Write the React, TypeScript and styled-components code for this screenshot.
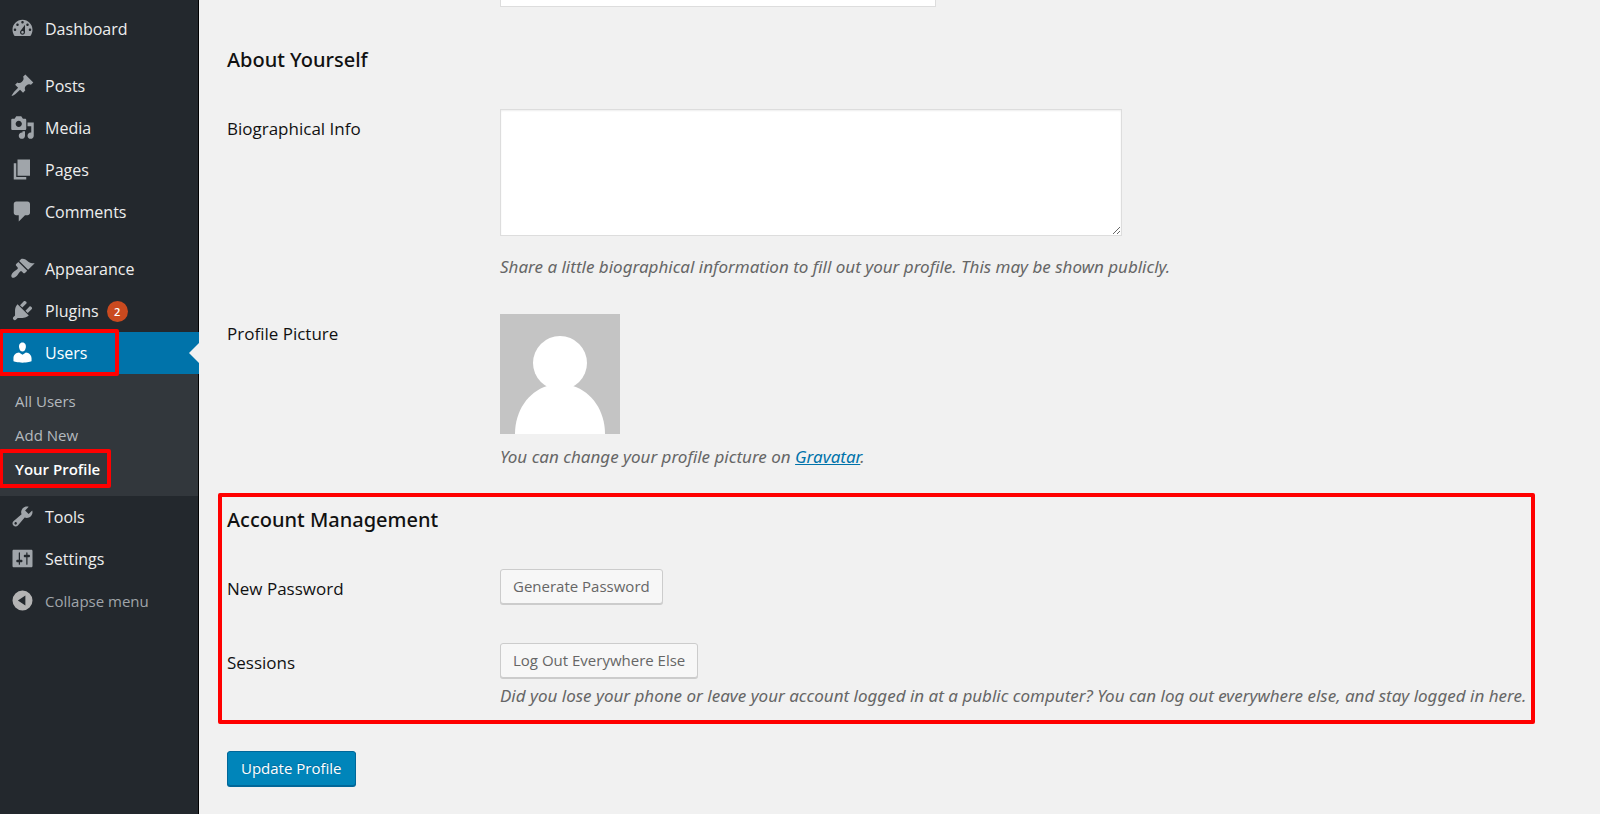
import React from 'react';
import styled, { createGlobalStyle, css } from 'styled-components';

const GlobalStyle = createGlobalStyle`
  *, *::before, *::after { box-sizing: border-box; }
  body {
    margin: 0;
    background: #f1f1f1;
    color: #444;
    font-family: "Open Sans", "Noto Sans", sans-serif;
    font-size: 16px;
  }
`;

const Layout = styled.div`
  display: flex;
  min-height: 100vh;
`;

/* ---------- sidebar ---------- */

const Sidebar = styled.nav`
  flex: 0 0 199px;
  padding-top: 8px;
  background: #23282d;
  border-right: 1px solid #000;
`;

const MenuList = styled.ul`
  list-style: none;
  margin: 0;
  padding: 0;
`;

const MenuItem = styled.li<{ $gapBefore?: boolean }>`
  position: relative;
  margin-top: ${(p) => (p.$gapBefore ? '15px' : '0')};
`;

const menuRow = css`
  display: flex;
  align-items: flex-start;
  gap: 10px;
  height: 42px;
  padding: 0 0 0 10px;
  line-height: 42px;
`;

const MenuLink = styled.a<{ $current?: boolean }>`
  ${menuRow}
  margin-right: ${(p) => (p.$current ? '-1px' : '0')};
  color: ${(p) => (p.$current ? '#fff' : '#eee')};
  background: ${(p) => (p.$current ? '#0073aa' : 'transparent')};
  text-decoration: none;
  svg { fill: ${(p) => (p.$current ? '#fff' : '#a0a5aa')}; }
`;

const CollapseButton = styled.button`
  ${menuRow}
  width: 100%;
  border: 0;
  background: none;
  color: #a0a5aa;
  font-family: inherit;
  font-size: 15px;
  text-align: left;
  cursor: pointer;
  svg { fill: #b4b4b4; }
`;

const IconSvg = styled.svg`
  flex: none;
  width: 25px;
  height: 25px;
  margin-top: 8px;
`;

const CountBadge = styled.span`
  align-self: center;
  width: 21px;
  height: 21px;
  margin-left: -2px;
  border-radius: 50%;
  background: #ca4a1f;
  color: #fff;
  font-size: 11px;
  font-weight: 600;
  line-height: 21px;
  text-align: center;
`;

const CurrentArrow = styled.span`
  position: absolute;
  top: 11px;
  right: -1px;
  border: 10px solid transparent;
  border-left-width: 0;
  border-right-color: #f1f1f1;
`;

const Submenu = styled.ul`
  list-style: none;
  margin: 0;
  padding: 10px 0;
  background: #32373c;
`;

const SubmenuItem = styled.li`
  position: relative;
`;

const SubmenuLink = styled.a<{ $current?: boolean }>`
  display: block;
  padding-left: 15px;
  color: ${(p) => (p.$current ? '#fff' : '#b4b9be')};
  font-size: 15px;
  font-weight: ${(p) => (p.$current ? 600 : 400)};
  line-height: 34px;
  text-decoration: none;
`;

const Highlight = styled.span<{ $width: number }>`
  position: absolute;
  top: -3px;
  bottom: -2px;
  left: -1px;
  width: ${(p) => p.$width}px;
  border: 4px solid #f00;
  border-radius: 2px;
  pointer-events: none;
  z-index: 1;
`;

/* ---------- profile form ---------- */

const Main = styled.main`
  flex: 1;
  min-width: 0;
  padding: 0 65px 27px 28px;
  overflow: hidden;
`;

const Form = styled.form`
  display: flex;
  flex-direction: column;
  align-items: stretch;
`;

const Heading = styled.h2`
  margin: 0 0 36px;
  color: #111;
  font-family: "Noto Sans", sans-serif;
  font-size: 20px;
  font-weight: 500;
  line-height: 26px;
`;

const Rows = styled.div<{ $gap: number }>`
  display: flex;
  flex-direction: column;
  gap: ${(p) => p.$gap}px;
`;

const Row = styled.div`
  display: grid;
  grid-template-columns: 273px minmax(0, 1fr);
  align-items: start;
`;

const RowLabel = styled.label`
  padding-top: 8px;
  color: #111;
  font-size: 17px;
  line-height: 24px;
`;

const Field = styled.div<{ $gap: number }>`
  display: flex;
  flex-direction: column;
  align-items: flex-start;
  gap: ${(p) => p.$gap}px;
`;

/* The page is scrolled, so only the foot of this row is in view. */
const ScrolledRow = styled(Row)`
  margin: -29px 0 40px;
`;

const TextInput = styled.input`
  width: 436px;
  max-width: 100%;
  height: 36px;
  border: 1px solid #ddd;
  background: #fff;
  font: inherit;
`;

const TextArea = styled.textarea`
  display: block;
  width: 622px;
  max-width: 100%;
  height: 127px;
  padding: 4px 8px;
  border: 1px solid #ddd;
  background: #fff;
  box-shadow: inset 0 1px 2px rgba(0, 0, 0, 0.07);
  font: inherit;
  resize: both;
`;

const Description = styled.p`
  margin: 0;
  color: #666;
  font-family: "Noto Sans", sans-serif;
  font-size: 17px;
  font-style: italic;
  line-height: 24px;
  a { color: #0073aa; }
`;

const Avatar = styled.svg`
  display: block;
  width: 120px;
  height: 120px;
`;

const AccountPanel = styled.section`
  margin: 24px 0 27px -9px;
  padding: 10px 4px 12px 5px;
  border: 4px solid #f00;
  border-radius: 2px;
`;

const Button = styled.button<{ $primary?: boolean }>`
  height: 35px;
  padding: 0 12px;
  border: 1px solid ${(p) => (p.$primary ? '#006799' : '#ccc')};
  border-radius: 3px;
  background: ${(p) => (p.$primary ? '#0085ba' : '#f7f7f7')};
  box-shadow: 0 1px 0 ${(p) => (p.$primary ? '#006799' : '#ccc')};
  color: ${(p) => (p.$primary ? '#fff' : '#666')};
  text-shadow: ${(p) => (p.$primary ? '0 -1px 1px #006799' : 'none')};
  font-family: inherit;
  font-size: 15px;
  line-height: 33px;
  cursor: pointer;
`;

const SubmitButton = styled(Button)`
  align-self: flex-start;
  padding: 0 13px;
`;

const paths = {
  dashboard:
    'M3.76 16h12.48c1.1-1.37 1.76-3.11 1.76-5 0-4.42-3.58-8-8-8s-8 3.58-8 8c0 1.89.66 3.63 1.76 5zM10 4c.55 0 1 .45 1 1s-.45 1-1 1-1-.45-1-1 .45-1 1-1zM6 6c.55 0 1 .45 1 1s-.45 1-1 1-1-.45-1-1 .45-1 1-1zm8 0c.55 0 1 .45 1 1s-.45 1-1 1-1-.45-1-1 .45-1 1-1zm-5.37 5.55L12 7v6c0 1.1-.9 2-2 2s-2-.9-2-2c0-.57.24-1.08.63-1.45zM4 10c.55 0 1 .45 1 1s-.45 1-1 1-1-.45-1-1 .45-1 1-1zm12 0c.55 0 1 .45 1 1s-.45 1-1 1-1-.45-1-1 .45-1 1-1zm-5 3c0-.55-.45-1-1-1s-1 .45-1 1 .45 1 1 1 1-.45 1-1z',
  post: 'M10.44 3.02l1.82-1.82 6.36 6.35-1.83 1.82c-1.05-.68-2.48-.57-3.41.36l-.75.75c-.92.93-1.04 2.35-.35 3.41l-1.83 1.82-2.41-2.41-2.8 2.79c-.42.42-3.38 2.71-3.8 2.29s1.86-3.39 2.28-3.81l2.79-2.79L4.1 9.36l1.83-1.82c1.05.69 2.48.57 3.4-.36l.75-.75c.93-.92 1.05-2.35.36-3.41z',
  media:
    'M13 11V4c0-.55-.45-1-1-1h-1.67L9 1H5L3.67 3H2c-.55 0-1 .45-1 1v7c0 .55.45 1 1 1h10c.55 0 1-.45 1-1zM7 4.5c1.38 0 2.5 1.12 2.5 2.5S8.38 9.5 7 9.5 4.5 8.38 4.5 7 5.62 4.5 7 4.5zM14 6h5v10.5c0 1.38-1.12 2.5-2.5 2.5S14 17.88 14 16.5s1.12-2.5 2.5-2.5c.17 0 .34.02.5.05V9h-3V6zm-4 8.05V13h2v3.5c0 1.38-1.12 2.5-2.5 2.5S7 17.88 7 16.5 8.12 14 9.5 14c.17 0 .34.02.5.05z',
  page: 'M6 15V2h10v13H6zm-1 1h8v2H3V5h2v11z',
  comments:
    'M5 2h9c1.1 0 2 .9 2 2v7c0 1.1-.9 2-2 2h-2l-5 5v-5H5c-1.1 0-2-.9-2-2V4c0-1.1.9-2 2-2z',
  appearance:
    'M14.48 11.06L7.41 3.99l1.5-1.5c.5-.56 2.3-.47 3.51.32 1.21.8 1.43 1.28 2.91 2.1 1.18.64 2.45 1.26 4.45.85zm-.71.71L6.7 4.7 4.93 6.47c-.39.39-.39 1.02 0 1.41l1.06 1.06c.39.39.39 1.03 0 1.42-.6.6-1.43 1.11-2.21 1.69-.35.26-.7.53-1.01.84C1.43 14.23.4 16.08 1.4 17.07c.99 1 2.84-.03 4.18-1.36.31-.31.58-.66.85-1.02.57-.78 1.08-1.61 1.69-2.21.39-.39 1.02-.39 1.41 0l1.06 1.06c.39.39 1.02.39 1.41 0z',
  plugins:
    'M13.11 4.36L9.87 7.6 8 5.73l3.24-3.24c.35-.34 1.05-.2 1.56.32.52.51.66 1.21.31 1.55zm-8 1.77l.91-1.12 9.01 9.01-1.19.84c-.71.71-2.63 1.16-3.82 1.16H6.14L4.9 17.26c-.59.59-1.54.59-2.12 0-.59-.58-.59-1.53 0-2.12l1.24-1.24v-3.88c0-1.13.4-3.19 1.09-3.89zm7.26 3.97l3.24-3.24c.34-.35 1.04-.21 1.55.31.52.51.66 1.21.31 1.55l-3.24 3.25z',
  users:
    'M10 9.25c-2.27 0-2.73-3.44-2.73-3.44C7 4.02 7.82 2 9.97 2c2.16 0 2.98 2.02 2.71 3.81 0 0-.41 3.44-2.68 3.44zm0 2.57L12.72 10c2.39 0 4.52 2.33 4.52 4.53v2.49s-3.65 1.13-7.24 1.13c-3.65 0-7.24-1.13-7.24-1.13v-2.49c0-2.25 1.94-4.48 4.47-4.48z',
  tools:
    'M16.68 9.77c-1.34 1.34-3.3 1.67-4.95.99l-5.41 6.52c-.99.99-2.59.99-3.58 0s-.99-2.59 0-3.57l6.52-5.42c-.68-1.65-.35-3.61.99-4.95 1.28-1.28 3.12-1.62 4.72-1.06l-2.89 2.89 2.82 2.82 2.86-2.87c.53 1.58.18 3.39-1.08 4.65zM3.81 16.21c.4.39 1.04.39 1.43 0 .4-.4.4-1.04 0-1.43-.39-.4-1.03-.4-1.43 0-.39.39-.39 1.03 0 1.43z',
  settings:
    'M18 16V4c0-.55-.45-1-1-1H3c-.55 0-1 .45-1 1v12c0 .55.45 1 1 1h14c.55 0 1-.45 1-1zM8 11h1c.55 0 1 .45 1 1s-.45 1-1 1H8v1.5c0 .28-.22.5-.5.5s-.5-.22-.5-.5V13H6c-.55 0-1-.45-1-1s.45-1 1-1h1V5.5c0-.28.22-.5.5-.5s.5.22.5.5V11zm5-2h-1c-.55 0-1-.45-1-1s.45-1 1-1h1V5.5c0-.28.22-.5.5-.5s.5.22.5.5V7h1c.55 0 1 .45 1 1s-.45 1-1 1h-1v5.5c0 .28-.22.5-.5.5s-.5-.22-.5-.5V9z',
  collapse: 'M10 2a8 8 0 1 0 0 16 8 8 0 0 0 0-16zM12.3 6v8L6.3 10z',
};

type IconName = keyof typeof paths;

const Icon = ({ name }: { name: IconName }) => (
  <IconSvg viewBox="0 0 20 20" aria-hidden="true">
    <path d={paths[name]} fillRule="evenodd" />
  </IconSvg>
);

interface Entry {
  name: IconName;
  label: string;
  gapBefore?: boolean;
  count?: number;
  current?: boolean;
}

const entries: Entry[] = [
  { name: 'dashboard', label: 'Dashboard' },
  { name: 'post', label: 'Posts', gapBefore: true },
  { name: 'media', label: 'Media' },
  { name: 'page', label: 'Pages' },
  { name: 'comments', label: 'Comments' },
  { name: 'appearance', label: 'Appearance', gapBefore: true },
  { name: 'plugins', label: 'Plugins', count: 2 },
  { name: 'users', label: 'Users', current: true },
  { name: 'tools', label: 'Tools' },
  { name: 'settings', label: 'Settings' },
];

const UsersSubmenu = () => (
  <Submenu>
    <SubmenuItem>
      <SubmenuLink href="#all-users">All Users</SubmenuLink>
    </SubmenuItem>
    <SubmenuItem>
      <SubmenuLink href="#add-new">Add New</SubmenuLink>
    </SubmenuItem>
    <SubmenuItem>
      <SubmenuLink href="#profile" $current aria-current="page">
        Your Profile
      </SubmenuLink>
      <Highlight $width={112} />
    </SubmenuItem>
  </Submenu>
);

export default function App() {
  return (
    <Layout>
      <GlobalStyle />
      <Sidebar>
        <MenuList>
          {entries.map((e) => (
            <React.Fragment key={e.name}>
              <MenuItem $gapBefore={e.gapBefore}>
                <MenuLink href={`#${e.name}`} $current={e.current}>
                  <Icon name={e.name} />
                  <span>{e.label}</span>
                  {e.count && <CountBadge>{e.count}</CountBadge>}
                </MenuLink>
                {e.current && <CurrentArrow />}
                {e.current && <Highlight $width={120} />}
              </MenuItem>
              {e.current && (
                <MenuItem>
                  <UsersSubmenu />
                </MenuItem>
              )}
            </React.Fragment>
          ))}
          <MenuItem>
            <CollapseButton type="button">
              <Icon name="collapse" />
              <span>Collapse menu</span>
            </CollapseButton>
          </MenuItem>
        </MenuList>
      </Sidebar>

      <Main>
        <Form onSubmit={(ev) => ev.preventDefault()}>
          <ScrolledRow>
            <span />
            <TextInput type="url" aria-label="Website" />
          </ScrolledRow>

          <Heading>About Yourself</Heading>
          <Rows $gap={35}>
            <Row>
              <RowLabel htmlFor="bio">Biographical Info</RowLabel>
              <Field $gap={19}>
                <TextArea id="bio" />
                <Description>
                  Share a little biographical information to fill out your profile. This may be
                  shown publicly.
                </Description>
              </Field>
            </Row>
            <Row>
              <RowLabel as="span">Profile Picture</RowLabel>
              <Field $gap={11}>
                <Avatar viewBox="0 0 120 120" role="img" aria-label="Profile Picture">
                  <rect width="120" height="120" fill="#c4c4c4" />
                  <circle cx="60" cy="49" r="27" fill="#fff" />
                  <path d="M47 72C28 78 15 97 15 120h90c0-23-13-42-32-48z" fill="#fff" />
                </Avatar>
                <Description>
                  You can change your profile picture on <a href="#gravatar">Gravatar</a>.
                </Description>
              </Field>
            </Row>
          </Rows>

          <AccountPanel>
            <Heading>Account Management</Heading>
            <Rows $gap={39}>
              <Row>
                <RowLabel htmlFor="generate">New Password</RowLabel>
                <Field $gap={6}>
                  <Button type="button" id="generate">
                    Generate Password
                  </Button>
                </Field>
              </Row>
              <Row>
                <RowLabel htmlFor="sessions">Sessions</RowLabel>
                <Field $gap={6}>
                  <Button type="button" id="sessions">
                    Log Out Everywhere Else
                  </Button>
                  <Description>
                    Did you lose your phone or leave your account logged in at a public computer?
                    You can log out everywhere else, and stay logged in here.
                  </Description>
                </Field>
              </Row>
            </Rows>
          </AccountPanel>

          <SubmitButton type="submit" $primary>
            Update Profile
          </SubmitButton>
        </Form>
      </Main>
    </Layout>
  );
}
